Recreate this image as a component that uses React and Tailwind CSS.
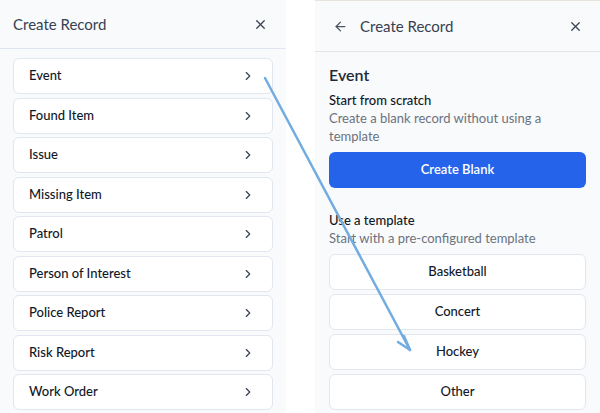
import React from "react";
import { ArrowLeft, ChevronRight, X } from "lucide-react";

const recordTypes = [
  "Event",
  "Found Item",
  "Issue",
  "Missing Item",
  "Patrol",
  "Person of Interest",
  "Police Report",
  "Risk Report",
  "Work Order",
];

const templates = ["Basketball", "Concert", "Hockey", "Other"];

const font = { fontFamily: '"Lato", "Noto Sans", sans-serif' };

const App = () => {
  return (
    <div className="relative flex h-[413px] w-[600px] overflow-hidden bg-white text-[#1f2937]" style={font}>
      {/* Left: type picker */}
      <div className="flex h-full w-[286px] flex-col bg-[#f9fafb]">
        <div className="flex h-[49px] items-center justify-between border-b border-[#dfe6f0] pl-[13px] pr-[18px]">
          <span className="text-[15px] text-[#374151]">Create Record</span>
          <X size={15} strokeWidth={2} className="text-[#374151]" />
        </div>
        <div className="flex flex-col gap-[3.5px] px-[13px] pt-[9px]">
          {recordTypes.map((name) => (
            <div
              key={name}
              className="flex h-[36px] items-center justify-between rounded-[6px] border border-[#e1e6ef] bg-white pl-[15px] pr-[17px]"
            >
              <span className="text-[13px] font-medium text-[#111827]">{name}</span>
              <ChevronRight size={14} strokeWidth={2} className="text-[#374151]" />
            </div>
          ))}
        </div>
      </div>

      {/* Right: template step */}
      <div className="ml-[29px] flex h-full w-[285px] flex-col border-t border-[#e8e6dc] bg-[#f9fafb]">
        <div className="flex h-[51px] items-center justify-between border-b border-[#e3e5e8] pl-[18px] pr-[17px]">
          <div className="flex items-center gap-[12px]">
            <ArrowLeft size={15} strokeWidth={2} className="text-[#4b5563]" />
            <span className="text-[15px] text-[#374151]">Create Record</span>
          </div>
          <X size={15} strokeWidth={2} className="text-[#374151]" />
        </div>
        <div className="flex flex-col px-[14px] pt-[12px]">
          <div className="text-[16px] font-semibold leading-[22px] text-[#1f2937]">Event</div>
          <div className="mt-[5px] text-[13px] font-medium leading-[18px] text-[#111827]">Start from scratch</div>
          <div className="text-[13px] leading-[18px] text-[#6b7280]">
            Create a blank record without using a template
          </div>
          <button className="mt-[7px] h-[36px] rounded-[6px] bg-[#2563eb] text-[13px] font-semibold text-white">
            Create Blank
          </button>
          <div className="mt-[23px] text-[13px] font-medium leading-[18px] text-[#111827]">Use a template</div>
          <div className="text-[13px] leading-[18px] text-[#6b7280]">Start with a pre-configured template</div>
          <div className="mt-[7px] flex flex-col gap-[4px]">
            {templates.map((name) => (
              <div
                key={name}
                className="flex h-[36px] items-center justify-center rounded-[6px] border border-[#e1e6ef] bg-white text-[13px] font-medium text-[#111827]"
              >
                {name}
              </div>
            ))}
          </div>
        </div>
      </div>

      {/* Annotation arrow */}
      <svg className="pointer-events-none absolute left-0 top-0" width="600" height="413">
        <g stroke="#72ace0" strokeWidth="2.5" fill="none" strokeLinecap="round" strokeLinejoin="round">
          <line x1="265" y1="78" x2="410" y2="350" />
          <polyline points="404,336 410,350 398,342" />
        </g>
      </svg>
    </div>
  );
};

export default App;
